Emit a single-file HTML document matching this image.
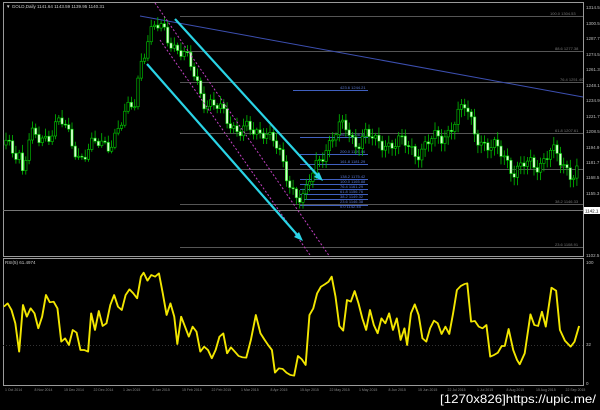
<!DOCTYPE html>
<html><head><meta charset="utf-8"><style>
html,body{margin:0;padding:0;background:#000;width:600px;height:410px;overflow:hidden}
svg{position:absolute;left:0;top:0}
text{font-family:"Liberation Sans",sans-serif}
</style></head><body>
<svg id="s" width="600" height="410" viewBox="0 0 600 410">
<rect width="600" height="410" fill="#000"/>
<rect x="3.5" y="2.5" width="580" height="254" fill="none" stroke="#9a9a9a" stroke-width="1"/>
<rect x="3.5" y="258.5" width="580" height="127" fill="none" stroke="#9a9a9a" stroke-width="1"/>
<g stroke="#555" stroke-width="1">
<line x1="180" y1="16.5" x2="583" y2="16.5"/>
<line x1="180" y1="51.5" x2="583" y2="51.5"/>
<line x1="180" y1="82.5" x2="583" y2="82.5"/>
<line x1="180" y1="133.5" x2="583" y2="133.5"/>
<line x1="180" y1="169.5" x2="583" y2="169.5"/>
<line x1="180" y1="204.5" x2="583" y2="204.5"/>
<line x1="3" y1="210.5" x2="583" y2="210.5" stroke="#777"/>
<line x1="180" y1="247.5" x2="583" y2="247.5"/>
</g>
<g stroke="#4060c0" stroke-width="1">
<line x1="293" y1="90.5" x2="368" y2="90.5"/>
<line x1="300" y1="137.5" x2="368" y2="137.5"/>
<line x1="300" y1="154.5" x2="368" y2="154.5"/>
<line x1="300" y1="164.5" x2="368" y2="164.5"/>
<line x1="300" y1="179.5" x2="368" y2="179.5"/>
<line x1="300" y1="184.5" x2="368" y2="184.5"/>
<line x1="300" y1="189.5" x2="368" y2="189.5"/>
<line x1="300" y1="194.5" x2="368" y2="194.5"/>
<line x1="300" y1="199.5" x2="368" y2="199.5"/>
<line x1="300" y1="205.5" x2="368" y2="205.5"/>
</g>
<g font-size="4" fill="#5a78d0">
<text x="340" y="89">423.6 1244.21</text>
<text x="340" y="136">261.8 1208.08</text>
<text x="340" y="153">200.0 1195.06</text>
<text x="340" y="163">161.8 1181.29</text>
<text x="340" y="178">138.2 1175.42</text>
<text x="340" y="183">100.0 1165.88</text>
<text x="340" y="188">76.4 1161.29</text>
<text x="340" y="193">61.8 1156.76</text>
<text x="340" y="198">38.2 1149.32</text>
<text x="340" y="203">23.6 1146.38</text>
<text x="340" y="208">0.0 1142.45</text>
</g>
<g font-size="4" fill="#777">
<text x="550" y="15">100.0 1304.53</text>
<text x="555" y="50">88.6 1277.38</text>
<text x="560" y="81">76.4 1251.40</text>
<text x="555" y="132">61.8 1207.61</text>
<text x="560" y="168">50.0</text>
<text x="555" y="203">38.2 1146.33</text>
<text x="555" y="246">23.6 1108.91</text>
</g>
<line x1="140" y1="16" x2="583" y2="97" stroke="#3c4fb0" stroke-width="1"/>
<g id="candles"></g>
<g stroke="#c040c0" stroke-width="1" stroke-dasharray="2,2" fill="none">
<line x1="155" y1="3" x2="330" y2="257"/>
<line x1="160" y1="40" x2="310" y2="255"/>
</g>
<g stroke="#2ad4e6" stroke-width="2.2" fill="#2ad4e6">
<line x1="175" y1="19" x2="320" y2="178"/>
<line x1="147" y1="64" x2="300" y2="238"/>
<polygon points="323,181 314,177 319,172" stroke="none"/>
<polygon points="303,241 294,237 299,232" stroke="none"/>
</g>
<g font-size="4.5" fill="#bbb">
<text x="586" y="9">1314.5</text>
<text x="586" y="25">1300.5</text>
<text x="586" y="40">1287.7</text>
<text x="586" y="56">1274.5</text>
<text x="586" y="71">1261.3</text>
<text x="586" y="87">1248.1</text>
<text x="586" y="102">1234.9</text>
<text x="586" y="118">1221.7</text>
<text x="586" y="133">1208.5</text>
<text x="586" y="149">1194.9</text>
<text x="586" y="164">1181.7</text>
<text x="586" y="179">1168.5</text>
<text x="586" y="195">1155.3</text>
<text x="586" y="257">1102.5</text>
<text x="586" y="264">100</text>
<text x="586" y="346">32</text>
<text x="586" y="385">0</text>
</g>
<rect x="584" y="207" width="16" height="7" fill="#fff"/>
<text x="585" y="212.5" font-size="4.5" fill="#000">1142.1</text>
<text x="6" y="8" font-size="4.5" fill="#ccc">▼ GOLD,Daily  1141.64 1143.59 1139.95 1140.31</text>
<text x="5" y="264" font-size="4.5" fill="#ccc">RSI(5) 61.4974</text>
<line x1="3" y1="345.5" x2="583" y2="345.5" stroke="#333" stroke-dasharray="1,2"/>
<g transform="translate(0,250) scale(0.383,0.3333)">
<polyline fill="none" stroke="#f2e600" stroke-width="5" stroke-linejoin="round" points="10,170 20,160 30,180 40,220 50,305 60,165 70,200 80,175 90,190 100,235 110,200 120,135 130,157 140,155 150,175 160,275 170,265 180,285 190,240 200,248 210,300 220,300 230,305 238,190 248,240 258,183 268,228 278,220 288,165 298,135 308,170 318,180 328,135 338,118 348,130 358,145 368,80 375,68 385,92 395,75 405,80 415,70 425,130 435,195 445,160 455,200 463,282 473,200 483,230 493,260 503,230 513,245 523,305 533,290 543,300 553,325 563,300 573,260 583,250 593,310 603,292 613,305 623,318 633,322 643,323 655,270 668,195 680,250 690,268 700,285 710,300 718,368 728,355 738,357 748,368 758,375 768,377 778,318 788,328 798,345 808,195 818,175 828,130 838,110 848,103 858,95 866,80 876,140 886,228 896,242 906,150 916,155 926,123 936,160 946,205 956,240 966,180 976,225 986,250 996,205 1006,220 1016,190 1026,240 1036,205 1046,270 1056,235 1063,285 1073,190 1083,163 1093,195 1103,265 1113,275 1123,235 1133,212 1143,220 1153,252 1163,230 1173,252 1183,190 1193,120 1203,108 1213,102 1220,100 1230,215 1240,213 1250,230 1260,235 1270,225 1280,320 1290,315 1300,308 1310,288 1318,288 1328,237 1340,300 1350,330 1357,343 1370,310 1385,193 1395,225 1405,228 1415,185 1425,230 1440,113 1452,122 1462,240 1475,272 1490,290 1500,275 1512,228"/>
</g>
<g font-size="3.5" fill="#888" id="dates"></g>
<text x="440" y="403" font-size="12" fill="#fff" textLength="156" lengthAdjust="spacingAndGlyphs">[1270x826]https://upic.me/</text>
</svg>
<script>
(function(){
var ns="http://www.w3.org/2000/svg";
var a=[[5,145],[20,150],[22,172],[30,140],[40,140],[50,130],[60,122],[70,140],[80,155],[90,150],[100,145],[110,140],[120,128],[135,100],[140,60],[148,40],[155,30],[165,30],[175,45],[185,60],[195,75],[205,100],[215,110],[225,115],[240,130],[255,135],[265,125],[275,145],[285,175],[295,190],[305,198],[315,170],[325,145],[335,135],[345,128],[355,140],[365,135],[375,145],[385,140],[400,145],[415,150],[425,145],[440,140],[455,118],[465,110],[475,130],[490,150],[505,155],[515,170],[525,168],[535,165],[550,150],[560,165],[570,170],[580,165]];
function f(x){for(var i=1;i<a.length;i++){if(x<=a[i][0]){var t=(x-a[i-1][0])/(a[i][0]-a[i-1][0]);return a[i-1][1]+t*(a[i][1]-a[i-1][1]);}}return a[a.length-1][1];}
var g=document.getElementById("candles"),prev=f(5);
for(var x=6;x<=580;x+=3.3){
var c=f(x)+Math.sin(x*1.7)*7+Math.sin(x*0.53)*5;var o=prev;prev=c;
var yt=Math.min(o,c),yb=Math.max(o,c);if(yb-yt<1)yb=yt+1;
var hi=yt-2-Math.abs(Math.sin(x*2.3))*6,lo=yb+2+Math.abs(Math.cos(x*1.9))*6;
var l=document.createElementNS(ns,"line");l.setAttribute("x1",x);l.setAttribute("x2",x);l.setAttribute("y1",hi);l.setAttribute("y2",lo);l.setAttribute("stroke","#00c000");l.setAttribute("stroke-width","0.8");g.appendChild(l);
var r=document.createElementNS(ns,"rect");r.setAttribute("x",x-1.2);r.setAttribute("y",yt);r.setAttribute("width",2.4);r.setAttribute("height",yb-yt);
r.setAttribute("fill",c>o?"#d8ffd0":"#000");r.setAttribute("stroke","#00d000");r.setAttribute("stroke-width","0.6");g.appendChild(r);}
var d=document.getElementById("dates");var ms=["Oct 2014","Nov 2014","Dec 2014","Dec 2014","Jan 2015","Jan 2015","Feb 2015","Feb 2015","Mar 2015","Apr 2015","Apr 2015","May 2015","May 2015","Jun 2015","Jun 2015","Jul 2015","Jul 2015","Aug 2015","Aug 2015","Sep 2015"];
for(var i=0;i<ms.length;i++){var t=document.createElementNS(ns,"text");t.setAttribute("x",5+i*29.5);t.setAttribute("y",391);t.textContent=(1+i*7%28)+" "+ms[i];d.appendChild(t);}
})();
</script>
</body></html>
